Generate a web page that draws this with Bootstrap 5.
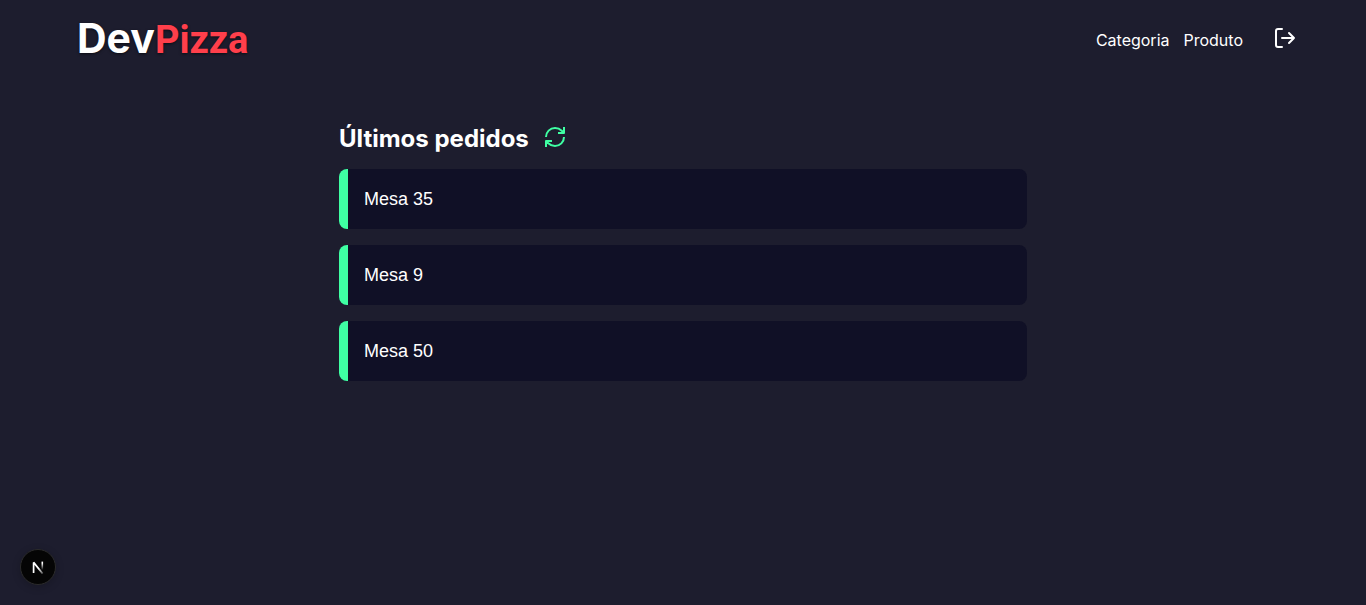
<!DOCTYPE html>
<html lang="pt-BR">
<head>
<meta charset="utf-8">
<meta name="viewport" content="width=device-width, initial-scale=1">
<title>DevPizza</title>
<link rel="stylesheet" href="https://cdn.jsdelivr.net/npm/bootstrap@5.3.0/dist/css/bootstrap.min.css">
<style>
  body { background: #1d1d2e; color: #fff; font-family: Inter, "Liberation Sans", sans-serif; }
  .site-header { height: 80px; padding: 0 69px 4px 77px; }
  .logo { font-size: 41px; font-weight: 700; line-height: 48px; padding-top: 2px; text-shadow: 0 1px 3px rgba(0, 0, 0, .6); }
  .logo span { color: #ff3f4b; font-family: Roboto, sans-serif; font-size: 38px; }
  .site-nav { gap: 14px; }
  .site-nav a { line-height: 24px; padding-top: 3px; }
  .logout { margin-left: 16px; }
  .orders { max-width: 720px; padding: 42px 16px 0; }
  .orders h1 { font-size: 24px; line-height: 32px; font-weight: 700; padding-top: 1px; }
  .refresh { color: #3fffa3; }
  .orders-title { gap: 14px; margin-bottom: 14px; }
  .order { height: 60px; background: #101026; color: #fff; border-radius: 8px; font: 18px "Liberation Sans", sans-serif; }
  .order-tag { width: 9px; background: #3fffa3; }
  .dev-badge { left: 20px; bottom: 20px; width: 36px; height: 36px; background: #050505; border: 1px solid #2b2b2b; box-shadow: 0 2px 8px rgba(0, 0, 0, .2); }
</style>
</head>
<body>
<header class="site-header d-flex align-items-center justify-content-between">
  <a class="logo text-white text-decoration-none" href="#">Dev<span>Pizza</span></a>
  <nav class="site-nav d-flex align-items-center">
    <a class="text-white text-decoration-none" href="#">Categoria</a>
    <a class="text-white text-decoration-none" href="#">Produto</a>
    <button class="logout btn p-0 border-0 text-white d-flex" type="button" aria-label="Sair">
      <svg width="24" height="24" viewBox="0 0 24 24" fill="none" stroke="currentColor" stroke-width="2" stroke-linecap="round" stroke-linejoin="round"><path d="M9 21H5a2 2 0 0 1-2-2V5a2 2 0 0 1 2-2h4M16 17l5-5-5-5M21 12H9"/></svg>
    </button>
  </nav>
</header>
<main class="orders mx-auto">
  <div class="orders-title d-flex align-items-start">
    <h1 class="mb-0">Últimos pedidos</h1>
    <button class="refresh btn p-0 pt-1 border-0 d-flex" type="button" aria-label="Atualizar">
      <svg width="24" height="22" viewBox="0 1 24 22" fill="none" stroke="currentColor" stroke-width="2" stroke-linejoin="round"><path d="M3 12a9 9 0 0 1 9-9 9.75 9.75 0 0 1 6.74 2.74L21 8M21 2v6h-6M21 12a9 9 0 0 1-9 9 9.75 9.75 0 0 1-6.74-2.74L3 16M9 16H3v6"/></svg>
    </button>
  </div>
  <section class="d-flex flex-column gap-3">
    <button class="order d-flex align-items-center gap-3 p-0 border-0 overflow-hidden" type="button"><span class="order-tag h-100"></span><span>Mesa 35</span></button>
    <button class="order d-flex align-items-center gap-3 p-0 border-0 overflow-hidden" type="button"><span class="order-tag h-100"></span><span>Mesa 9</span></button>
    <button class="order d-flex align-items-center gap-3 p-0 border-0 overflow-hidden" type="button"><span class="order-tag h-100"></span><span>Mesa 50</span></button>
  </section>
</main>
<button class="dev-badge position-fixed rounded-circle p-0 d-flex align-items-center justify-content-center" type="button" aria-label="Next.js">
  <svg width="14" height="14" viewBox="0 0 14 14" fill="none">
    <defs><linearGradient id="fade" x1="0" y1="0" x2="0" y2="1"><stop offset="0.2" stop-color="#fff"/><stop offset="1" stop-color="#fff" stop-opacity="0"/></linearGradient>
    <linearGradient id="tail" gradientUnits="userSpaceOnUse" x1="8" y1="8" x2="13" y2="14"><stop offset="0" stop-color="#fff"/><stop offset="1" stop-color="#fff" stop-opacity=".2"/></linearGradient></defs>
    <path d="M2.6 13V2.4L11.6 13.6" stroke="url(#tail)" stroke-width="1.7" stroke-linejoin="bevel"/>
    <path d="M10.5 1.6h1.6v8.4h-1.6z" fill="url(#fade)"/>
  </svg>
</button>
<script src="https://cdn.jsdelivr.net/npm/bootstrap@5.3.0/dist/js/bootstrap.bundle.min.js"></script>
</body>
</html>
